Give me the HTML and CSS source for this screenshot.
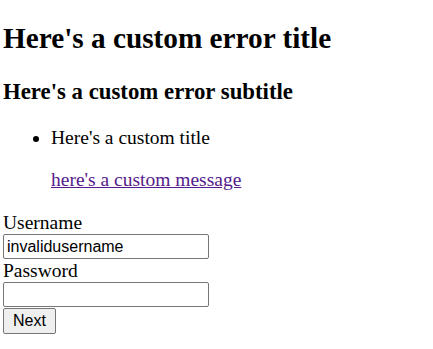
FILE: index.html
```html
<!DOCTYPE html>
<html lang="en">
<head>
    <meta charset="UTF-8">
    <meta name="viewport" content="width=device-width, initial-scale=1.0">
    <title>Login Error</title>
    <link rel="stylesheet" href="styles.css">
</head>
<body>
    <h1>Here's a custom error title</h1>
    <h2>Here's a custom error subtitle</h2>
    <ul class="errors">
        <li>
            Here's a custom title
            <p><a href="#" class="visited">here's a custom message</a></p>
        </li>
    </ul>
    <form class="login">
        <label for="username">Username</label>
        <input type="text" id="username" value="invalidusername">
        <label for="password">Password</label>
        <input type="password" id="password">
        <button type="submit">Next</button>
    </form>
</body>
</html>
```

FILE: styles.css
```css
body {
    font-family: "Liberation Serif", "Times New Roman", serif;
    font-size: 19.5px;
    margin: 0 3px;
    padding-top: 2px;
    color: #000;
    background-color: #fff;
}
h1 {
    font-size: 1.5em;
    margin: 0.67em 0;
}
h2 {
    font-size: 1.17em;
    margin: 24px 0 1em;
}
.errors {
    padding-left: 48px;
}
.errors a.visited {
    color: #551a8b;
}
.login {
    padding-top: 1px;
}
.login label {
    display: block;
    line-height: 23px;
}
.login input {
    display: block;
    box-sizing: border-box;
    width: 206px;
    height: 25px;
    margin: 0;
    padding: 1px 3px;
    font-family: "Liberation Sans", Arial, sans-serif;
    font-size: 16px;
    border: 1px solid #767676;
    border-radius: 2px;
}
.login button {
    display: block;
    box-sizing: border-box;
    height: 26px;
    font-family: "Liberation Sans", Arial, sans-serif;
    font-size: 16px;
    margin: 1px 0 0;
    padding: 1px 9px;
    color: #000;
    background-color: #efefef;
    border: 1px solid #767676;
    border-radius: 2px;
}
```
